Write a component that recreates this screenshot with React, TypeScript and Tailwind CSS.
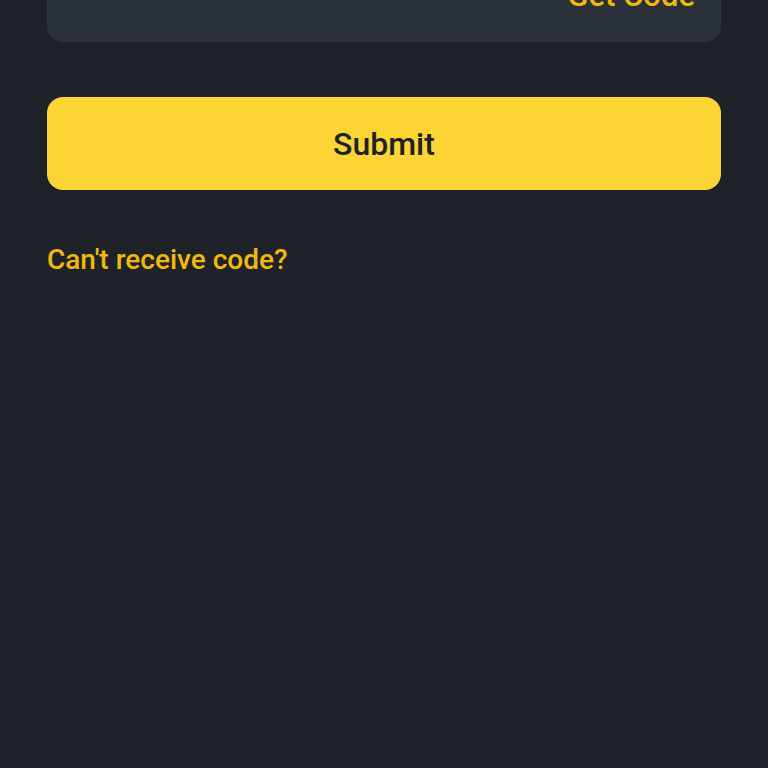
export default function App() {
  return (
    <div className="min-h-[768px] w-full overflow-hidden bg-[#1f2329] px-[47px] font-['Roboto',sans-serif]">
      {/* code input, scrolled mostly off the top */}
      <div className="-mt-[51px] flex h-[93px] items-center justify-end rounded-2xl bg-[#2b3139] pr-[26px]">
        <span className="mt-[2px] text-[31px] font-medium text-[#f0b90b]">Get Code</span>
      </div>

      <button className="mt-[55px] flex h-[93px] w-full items-center justify-center rounded-2xl bg-[#fcd535] text-[32px] font-medium text-[#1e2329]">
        Submit
      </button>

      <div className="mt-[49px] text-[28px] font-medium text-[#f0b90b]">Can't receive code?</div>
    </div>
  )
}
